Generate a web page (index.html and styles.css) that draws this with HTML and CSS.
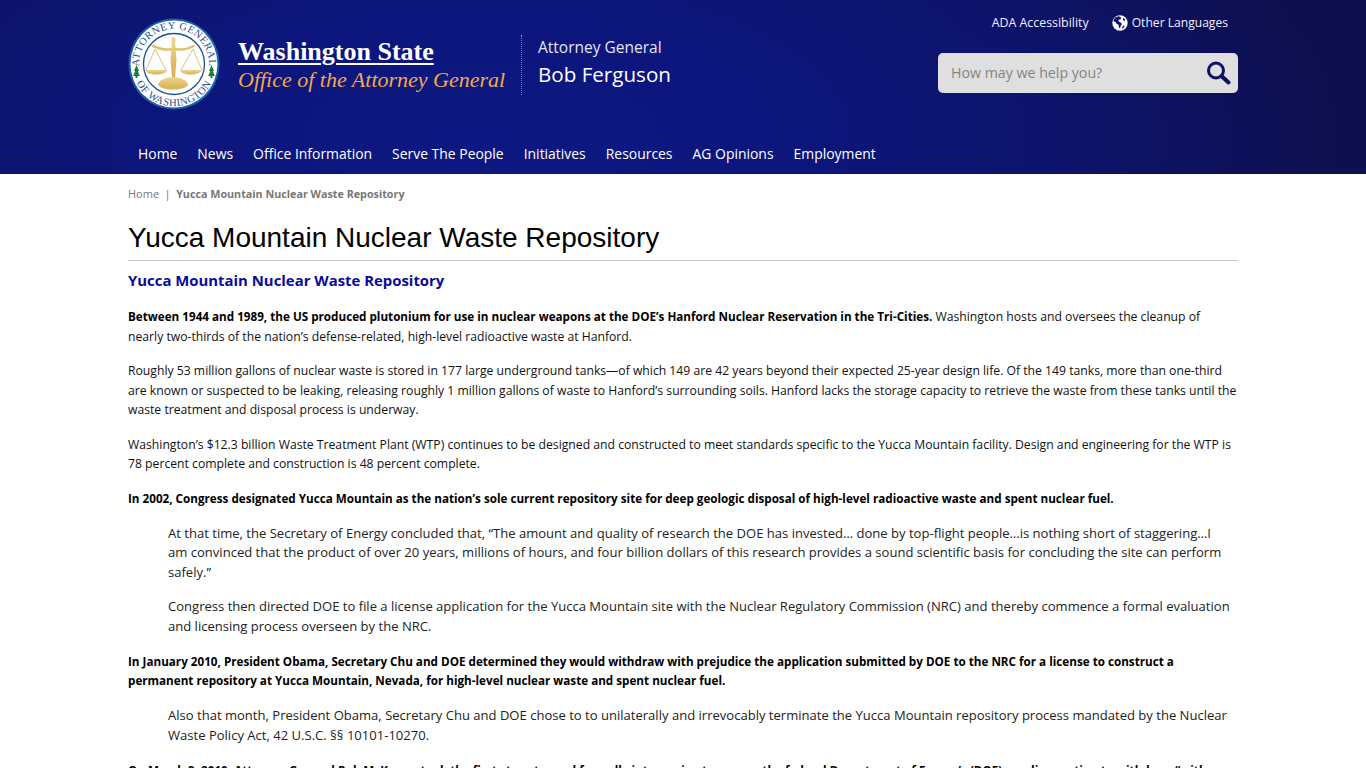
FILE: index.html
```html
<!DOCTYPE html>
<html lang="en">
<head>
<meta charset="utf-8">
<title>Yucca Mountain Nuclear Waste Repository</title>
<link rel="stylesheet" href="styles.css">
</head>
<body>
<header class="site-header">
  <div class="wrap">
    <div class="header-top">
      <div class="brand">
        <svg class="seal" width="92" height="92" viewBox="0 0 92 92">
          <defs>
            <path id="arcTop" d="M14.300 60.800A35 35 0 1 1 77.700 60.800"/>
            <path id="arcBottom" d="M6.500 60.400A42 42 0 0 0 85.500 60.400"/>
            <linearGradient id="gold" x1="0" y1="0" x2="0" y2="1"><stop offset="0" stop-color="#ecd592"/><stop offset="1" stop-color="#d8b050"/></linearGradient>
          </defs>
          <circle cx="46" cy="46" r="45.500" fill="#1d5fa8"/>
          <circle cx="46" cy="46" r="43.500" fill="#fff"/>
          <circle cx="46" cy="46" r="30.500" fill="#fff" stroke="#1b4f96" stroke-width="1.300"/>
          <text class="seal-text"><textPath href="#arcTop" startOffset="50%" text-anchor="middle">ATTORNEY GENERAL</textPath></text>
          <text class="seal-text"><textPath href="#arcBottom" startOffset="50%" text-anchor="middle">OF WASHINGTON</textPath></text>
          <path d="M8.500 47l2.500 6h-1.200l2 5h-2.300v2h-2v-2H5.200l2-5H6z" fill="#1f7a3c"/>
          <path d="M83.500 47l2.500 6h-1.200l2 5h-2.300v2h-2v-2h-2.300l2-5H81z" fill="#1f7a3c"/>
          <path d="M25 28q11 5 19 3M47 31q9 2 19-3" fill="none" stroke="#e0c26c" stroke-width="2.500" stroke-linecap="round"/>
          <path d="M45.500 19c2 0 2.500 3 1.500 5l1.500 18-1.500 17h-3l-1.500-17 1.500-18c-1-2-.5-5 1.500-5z" fill="url(#gold)"/>
          <path d="M27 31l-9 21M27 31l11 21M65 31l-12 21M65 31l9 21" stroke="#c9a653" stroke-width=".7" fill="none"/>
          <path d="M17 52h22c-1 6-20 6-22 0zM52 52h22c-2 6-21 6-22 0z" fill="url(#gold)"/>
          <path d="M30 67c0-5 9-8 15-8s15 3 15 8c-3 6-27 6-30 0z" fill="url(#gold)"/>
        </svg>
        <div class="brand-name">
          <a class="state" href="#">Washington State</a>
          <span class="office">Office of the Attorney General</span>
        </div>
        <div class="ag">
          <span class="ag-title">Attorney General</span>
          <span class="ag-name">Bob Ferguson</span>
        </div>
      </div>
      <div class="tools">
        <div class="tool-links">
          <a href="#">ADA Accessibility</a>
          <a class="lang" href="#">
            <svg width="16" height="16" viewBox="0 0 16 16"><circle cx="8" cy="8" r="7.700" fill="#fff"/><path d="M6.500 1.200L3 2.500 1.200 6l2.300 1 1.300 2 1.700.5.300 2.500 1.200 1.500.8-3 1.200-1.500-1.700-1.700L6 6l1.500-1.500L9.300 4 8.500 2zM11 10.500l1.700.5-1.500 2.500-1.200.3zM11 2.500l2.500 2.500-1 1-1.500-1z" fill="#10136b"/></svg>
            Other Languages
          </a>
        </div>
        <form class="search">
          <span class="search-text">How may we help you?</span>
          <svg width="26" height="26" viewBox="0 0 26 26"><circle cx="11" cy="10.500" r="7.500" fill="none" stroke="#0c0f62" stroke-width="3"/><path d="M16.500 16l7 6.500" stroke="#0c0f62" stroke-width="4" stroke-linecap="round"/></svg>
        </form>
      </div>
    </div>
    <nav class="main-nav">
      <a href="#">Home</a>
      <a href="#">News</a>
      <a href="#">Office Information</a>
      <a href="#">Serve The People</a>
      <a href="#">Initiatives</a>
      <a href="#">Resources</a>
      <a href="#">AG Opinions</a>
      <a href="#">Employment</a>
    </nav>
  </div>
</header>
<main class="wrap">
  <div class="crumbs"><a href="#">Home</a><span class="sep">|</span><strong>Yucca Mountain Nuclear Waste Repository</strong></div>
  <h1>Yucca Mountain Nuclear Waste Repository</h1>
  <h2>Yucca Mountain Nuclear Waste Repository</h2>
  <p><strong>Between 1944 and 1989, the US produced plutonium for use in nuclear weapons at the DOE’s Hanford Nuclear Reservation in the Tri-Cities.</strong> Washington hosts and oversees the cleanup of nearly two-thirds of the nation’s defense-related, high-level radioactive waste at Hanford.</p>
  <p>Roughly 53 million gallons of nuclear waste is stored in 177 large underground tanks—of which 149 are 42 years beyond their expected 25-year design life. Of the 149 tanks, more than one-third are known or suspected to be leaking, releasing roughly 1 million gallons of waste to Hanford’s surrounding soils. Hanford lacks the storage capacity to retrieve the waste from these tanks until the waste treatment and disposal process is underway.</p>
  <p>Washington’s $12.3 billion Waste Treatment Plant (WTP) continues to be designed and constructed to meet standards specific to the Yucca Mountain facility. Design and engineering for the WTP is 78 percent complete and construction is 48 percent complete.</p>
  <p><strong>In 2002, Congress designated Yucca Mountain as the nation’s sole current repository site for deep geologic disposal of high-level radioactive waste and spent nuclear fuel.</strong></p>
  <blockquote>
    <p>At that time, the Secretary of Energy concluded that, “The amount and quality of research the DOE has invested… done by top-flight people…is nothing short of staggering…I am convinced that the product of over 20 years, millions of hours, and four billion dollars of this research provides a sound scientific basis for concluding the site can perform safely.”</p>
    <p>Congress then directed DOE to file a license application for the Yucca Mountain site with the Nuclear Regulatory Commission (NRC) and thereby commence a formal evaluation and licensing process overseen by the NRC.</p>
  </blockquote>
  <p><strong>In January 2010, President Obama, Secretary Chu and DOE determined they would withdraw with prejudice the application submitted by DOE to the NRC for a license to construct a permanent repository at Yucca Mountain, Nevada, for high-level nuclear waste and spent nuclear fuel.</strong></p>
  <blockquote>
    <p>Also that month, President Obama, Secretary Chu and DOE chose to to unilaterally and irrevocably terminate the Yucca Mountain repository process mandated by the Nuclear Waste Policy Act, 42 U.S.C. §§ 10101-10270.</p>
  </blockquote>
  <p><strong>On March 3, 2010, Attorney General Rob McKenna took the first steps toward formally intervening to oppose the federal Department of Energy’s (DOE) pending motion to withdraw “with prejudice” its license application.</strong></p>
</main>
</body>
</html>
```
FILE: styles.css
```css
* { box-sizing: border-box; }
html, body { margin: 0; padding: 0; }
html { height: 768px; overflow: hidden; }
body {
  height: 768px;
  overflow: hidden;
  background: #fff;
  color: #111;
  font-family: "Open Sans", "Noto Sans", sans-serif;
  font-size: 12.2px;
  line-height: 19.5px;
}
a { color: inherit; text-decoration: none; }
.wrap { width: 1110px; margin: 0 auto; }

.site-header {
  height: 174px;
  background: radial-gradient(ellipse 860px 380px at 480px 140px, #0c1882 0%, #0c167c 35%, #0d1368 72%, #0e0f4e 100%);
  background-color: #0e0d48;
  color: #fff;
}
.header-top { display: flex; justify-content: space-between; height: 134px; }
.brand { display: flex; align-items: flex-start; padding-top: 18px; }
.seal { flex: none; }
.seal-text {
  font-family: "Liberation Serif", serif;
  font-size: 10.500px;
  letter-spacing: .5px;
  fill: #1b4f96;
}
.brand-name { display: flex; flex-direction: column; margin-left: 18px; padding-top: 19px; width: 283px; }
.state {
  font-family: "Liberation Serif", serif;
  font-weight: 700;
  font-size: 26px;
  line-height: 30px;
  text-decoration: underline;
  text-decoration-thickness: 2px;
  text-underline-offset: 3px;
  align-self: flex-start;
}
.office {
  font-family: "Liberation Serif", serif;
  font-style: italic;
  font-size: 22px;
  line-height: 26px;
  color: #f4a84e;
  white-space: nowrap;
}
.ag {
  display: flex;
  flex-direction: column;
  margin-top: 17px;
  height: 60px;
  padding-left: 16px;
  border-left: 1px dotted #7f86d8;
}
.ag-title { font-size: 15.500px; line-height: 24px; color: #e4e4f4; }
.ag-name { font-size: 20.600px; line-height: 30px; font-weight: 500; }

.tools { width: 300px; display: flex; flex-direction: column; }
.tool-links { display: flex; justify-content: flex-end; gap: 23px; padding: 13px 10px 0 0; font-size: 12.400px; line-height: 20px; color: #eef; }
.lang { display: flex; align-items: center; gap: 4px; font-size: 12.100px; }
.search {
  margin-top: 20px;
  height: 40px;
  border-radius: 5px;
  background: #dfdfdf;
  display: flex;
  align-items: center;
  justify-content: space-between;
  padding: 0 7px 0 13px;
}
.search-text { font-size: 14.200px; color: #858585; }

.main-nav { display: flex; gap: 20px; padding-left: 10px; font-size: 13.930px; line-height: 40px; height: 40px; }

.crumbs { padding-top: 10px; font-size: 11px; color: #777; height: 45px; }
.sep { margin: 0 5.500px; }
.crumbs strong { font-weight: 700; font-size: 10.750px; color: #777; }
h1 {
  margin: 0;
  font-family: "Liberation Sans", Arial, sans-serif;
  font-weight: 400;
  font-size: 28px;
  line-height: 37px;
  height: 42px;
  color: #000;
  border-bottom: 1px solid #c4c4c4;
}
h2 {
  margin: 9px 0 16px;
  font-size: 14.900px;
  font-weight: 700;
  line-height: 21px;
  color: #0a0a9c;
}
p { margin: 0 0 15px; }
strong { font-size: 11.680px; color: #000; }
blockquote { margin: 0 5px 15px 40px; padding-top: .6px; font-size: 13.060px; color: #222; }
blockquote p { margin-bottom: 15.400px; }
```
